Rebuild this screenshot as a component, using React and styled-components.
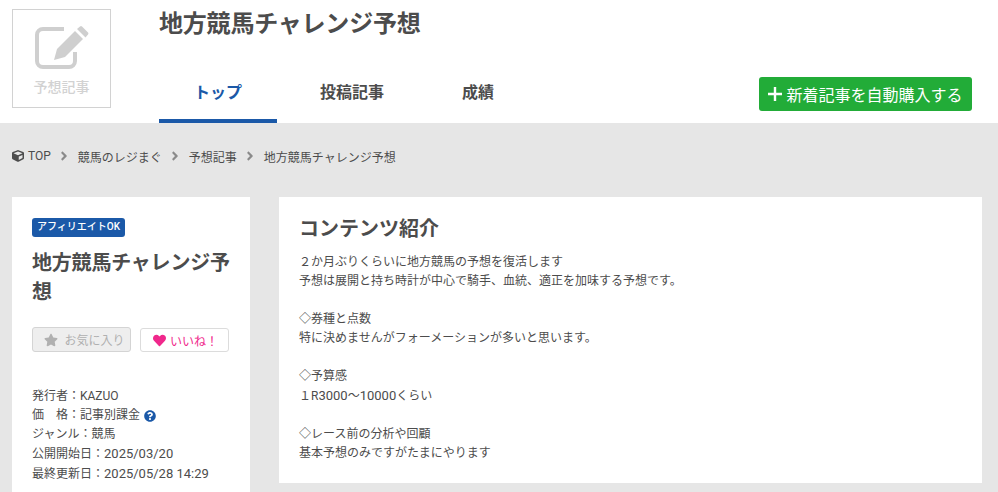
import styled, { createGlobalStyle } from "styled-components";
import { FaCube, FaAngleRight, FaStar, FaHeart, FaQuestionCircle } from "react-icons/fa";

const GlobalStyle = createGlobalStyle`
  html, body {
    margin: 0;
    height: 492px;
    overflow: hidden;
    background: #e6e6e6;
  }
  body {
    font-family: "Roboto", "Noto Sans CJK JP", sans-serif;
    color: #4c4c4c;
    font-size: 12px;
  }
  * { box-sizing: border-box; }
`;

const Header = styled.header`
  height: 123px;
  background: #fff;
  display: flex;
  padding-left: 12px;
`;

const LogoBox = styled.div`
  width: 99px;
  height: 99px;
  margin-top: 9px;
  border: 1px solid #d2d2d2;
  display: flex;
  flex-direction: column;
  align-items: center;
  color: #d2d2d2;
  font-size: 14px;
  font-weight: 500;
  line-height: 20px;
  svg { margin: 16px 0 7px; }
`;

const HeaderMain = styled.div`
  flex: 1;
  margin-left: 48px;
  padding-right: 26px;
  display: flex;
  flex-direction: column;
`;

const Title = styled.h1`
  margin: 8px 0 0;
  font-size: 24px;
  line-height: 32px;
  font-weight: 700;
  letter-spacing: -0.2px;
`;

const NavRow = styled.div`
  margin-top: auto;
  display: flex;
  justify-content: space-between;
  align-items: flex-start;
`;

const Tabs = styled.nav`
  display: flex;
  gap: 8px;
`;

const Tab = styled.a`
  height: 47px;
  padding: 0 35px 14px;
  display: flex;
  align-items: center;
  font-size: 16px;
  font-weight: 700;
  color: ${(p) => (p.$active ? "#1b59a8" : "#4c4c4c")};
  border-bottom: 4px solid ${(p) => (p.$active ? "#1b59a8" : "transparent")};
`;

const BuyButton = styled.button`
  width: 213px;
  height: 34px;
  margin-top: 1px;
  border: 0;
  border-radius: 3px;
  background: #22ac38;
  color: #fff;
  font: inherit;
  font-size: 16px;
  display: flex;
  align-items: center;
  justify-content: center;
  gap: 4px;
`;

const Crumbs = styled.div`
  display: flex;
  align-items: center;
  height: 66px;
  padding-left: 12px;
  font-size: 12px;
  color: #4c4c4c;
`;

const CrumbItem = styled.span`
  display: flex;
  align-items: center;
  gap: 4px;
`;

const CrumbArrow = styled(FaAngleRight)`
  margin: 0 6.5px;
  font-size: 14px;
  color: #8a8a8a;
`;

const Body = styled.main`
  display: flex;
  align-items: flex-start;
  gap: 29px;
  padding: 8px 16px 0 12px;
`;

const SideCard = styled.aside`
  width: 238px;
  height: 320px;
  flex-shrink: 0;
  background: #fff;
  padding: 21px 16px 21px 20px;
`;

const Badge = styled.span`
  display: inline-block;
  height: 19px;
  padding: 0 5px;
  background: #1b59a8;
  border-radius: 3px;
  color: #fff;
  font-size: 10px;
  font-weight: 500;
  line-height: 18px;
`;

const SideTitle = styled.h2`
  margin: 12px 0 0;
  font-size: 20px;
  line-height: 29px;
  font-weight: 700;
  letter-spacing: -0.2px;
`;

const Actions = styled.div`
  display: flex;
  align-items: flex-end;
  gap: 9px;
  margin-top: 20px;
`;

const ActionButton = styled.button`
  height: ${(p) => (p.$like ? 24 : 25)}px;
  width: ${(p) => p.$width}px;
  border-radius: 3px;
  border: 1px solid ${(p) => (p.$like ? "#dcdcdc" : "#d4d4d4")};
  background: ${(p) => (p.$like ? "#fff" : "#eeeeee")};
  color: ${(p) => (p.$like ? "#f0288c" : "#b0b0b0")};
  font: inherit;
  font-size: 12px;
  display: flex;
  align-items: center;
  justify-content: center;
  gap: ${(p) => (p.$like ? 4 : 6)}px;
  padding: 0 0 0 ${(p) => (p.$like ? 2 : 6)}px;
  svg { font-size: ${(p) => (p.$like ? 13 : 14)}px; }
`;

const Meta = styled.dl`
  margin: 35px 0 0;
  font-size: 12px;
  line-height: 19px;
`;

const MetaRow = styled.div`
  display: flex;
  align-items: center;
  gap: 4px;
  white-space: pre;
  svg { color: #1b59a8; font-size: 12px; }
`;

const Num = styled.span`
  font-size: 13px;
`;

const ContentCard = styled.section`
  flex: 1;
  height: 286px;
  background: #fff;
  padding: 17px 20px;
`;

const ContentTitle = styled.h2`
  margin: 0 0 9px;
  font-size: 20px;
  line-height: 30px;
  font-weight: 700;
`;

const Line = styled.p`
  margin: 0;
  min-height: 19px;
  font-size: 12px;
  line-height: 19px;
`;

function EditIcon() {
  return (
    <svg width="56" height="44" viewBox="0 0 56 44" fill="none">
      <path d="M30 3H9a6 6 0 0 0-6 6v26a6 6 0 0 0 6 6h26a6 6 0 0 0 6-6V26" stroke="#cfcfcf" strokeWidth="4" />
      <path d="M41 5l8 8-18 18-11 3 3-11z" fill="#cfcfcf" />
      <path d="M43 3l3-2.500q1-.8 2 0l6 6q.8 1 0 2l-2.500 3z" fill="#cfcfcf" />
    </svg>
  );
}

function PlusIcon() {
  return (
    <svg width="14" height="14" viewBox="0 0 14 14">
      <path d="M7 0v14M0 7h14" stroke="#fff" strokeWidth="2.4" />
    </svg>
  );
}

export default function App() {
  return (
    <>
      <GlobalStyle />
      <Header>
        <LogoBox>
          <EditIcon />
          予想記事
        </LogoBox>
        <HeaderMain>
          <Title>地方競馬チャレンジ予想</Title>
          <NavRow>
            <Tabs>
              <Tab $active>トップ</Tab>
              <Tab>投稿記事</Tab>
              <Tab>成績</Tab>
            </Tabs>
            <BuyButton>
              <PlusIcon />
              新着記事を自動購入する
            </BuyButton>
          </NavRow>
        </HeaderMain>
      </Header>
      <Crumbs>
        <CrumbItem>
          <FaCube />
          TOP
        </CrumbItem>
        <CrumbArrow />
        <CrumbItem>競馬のレジまぐ</CrumbItem>
        <CrumbArrow />
        <CrumbItem>予想記事</CrumbItem>
        <CrumbArrow />
        <CrumbItem>地方競馬チャレンジ予想</CrumbItem>
      </Crumbs>
      <Body>
        <SideCard>
          <Badge>アフィリエイトOK</Badge>
          <SideTitle>地方競馬チャレンジ予想</SideTitle>
          <Actions>
            <ActionButton $width={99}>
              <FaStar />
              お気に入り
            </ActionButton>
            <ActionButton $width={89} $like>
              <FaHeart />
              いいね！
            </ActionButton>
          </Actions>
          <Meta>
            <MetaRow>発行者：KAZUO</MetaRow>
            <MetaRow>
              価　格：記事別課金
              <FaQuestionCircle />
            </MetaRow>
            <MetaRow>ジャンル：競馬</MetaRow>
            <MetaRow>
              <span>公開開始日：<Num>2025/03/20</Num></span>
            </MetaRow>
            <MetaRow>
              <span>最終更新日：<Num>2025/05/28 14:29</Num></span>
            </MetaRow>
          </Meta>
        </SideCard>
        <ContentCard>
          <ContentTitle>コンテンツ紹介</ContentTitle>
          <Line>２か月ぶりくらいに地方競馬の予想を復活します</Line>
          <Line>予想は展開と持ち時計が中心で騎手、血統、適正を加味する予想です。</Line>
          <Line />
          <Line>◇券種と点数</Line>
          <Line>特に決めませんがフォーメーションが多いと思います。</Line>
          <Line />
          <Line>◇予算感</Line>
          <Line>１R<Num>3000</Num>～<Num>10000</Num>くらい</Line>
          <Line />
          <Line>◇レース前の分析や回顧</Line>
          <Line>基本予想のみですがたまにやります</Line>
        </ContentCard>
      </Body>
    </>
  );
}
